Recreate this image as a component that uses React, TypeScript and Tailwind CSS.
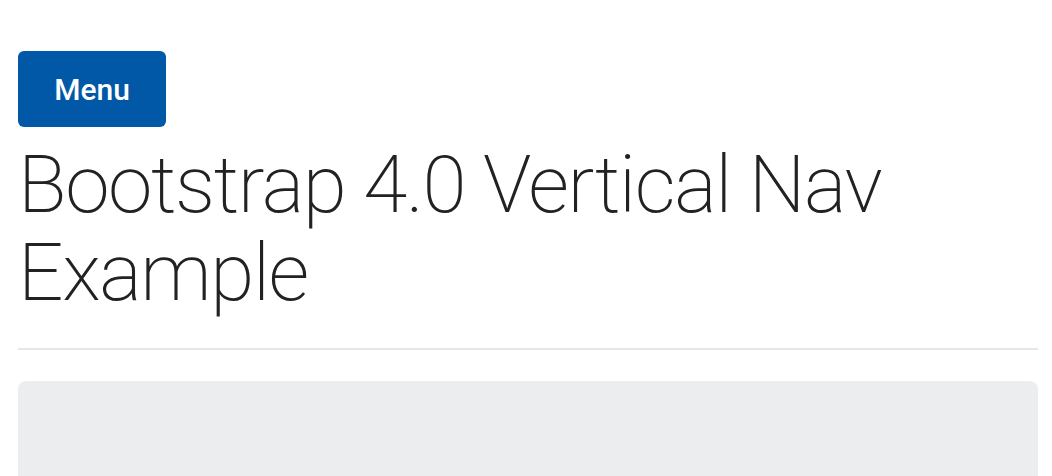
import React from "react";

const App = () => {
  return (
    <div className="min-h-screen bg-white" style={{ fontFamily: "Roboto, 'Liberation Sans', sans-serif" }}>
      <div className="pl-[18px] pr-[14px] pt-[51px]">
        <button className="w-[148px] h-[76px] rounded-[6px] bg-[#0058a7] text-white text-[30px] font-medium">
          Menu
        </button>
        <h1 className="mt-[14px] text-[80px] leading-[88px] font-extralight tracking-[-1.4px] text-[#222222]">
          Bootstrap 4.0 Vertical Nav Example
        </h1>
        <hr className="mt-[31px] border-t-2 border-[#e6e6e6]" />
        <div className="mt-[31px] h-[200px] rounded-[8px] bg-[#ecedef]" />
      </div>
    </div>
  );
};

export default App;
